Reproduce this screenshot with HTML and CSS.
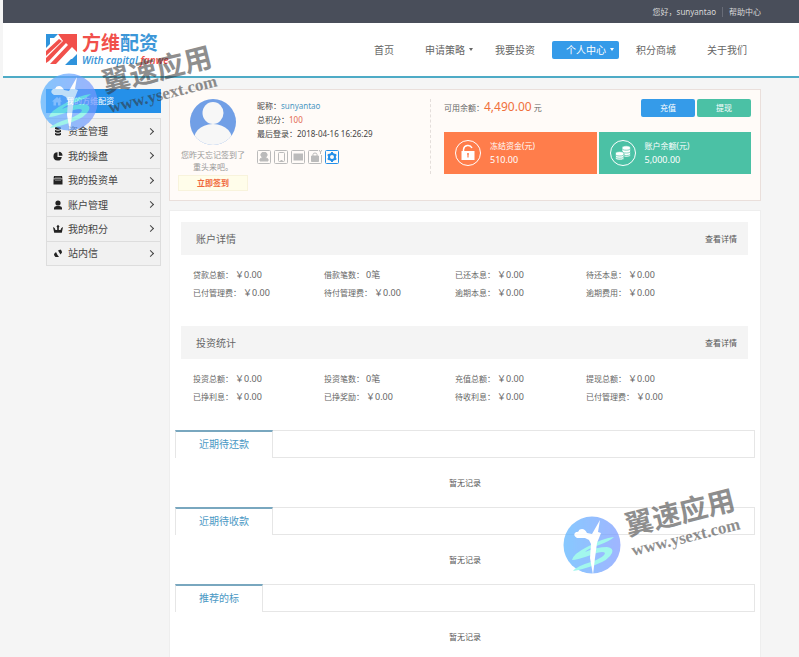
FILE: index.html
```
<!DOCTYPE html>
<html lang="zh-CN">
<head>
  <meta charset="UTF-8">
  <meta name="viewport" content="width=device-width, initial-scale=1.0"/>
  <title>方维配资 - 个人中心</title>
  <link rel="stylesheet" href="styles.css">
</head>
<body>
  <div class="topbar">
    <span>您好，sunyantao</span>
    <a href="#" class="help">帮助中心</a>
  </div>

  <header class="header">
    <a href="#" class="logo">
      <svg class="logo_icon" viewBox="0 0 31 31">
        <path d="M0 0H12L8 4H4V10L0 14Z" fill="#2f93dc"/>
        <path d="M31 20V31H19L25 25H26Z" fill="#2f93dc"/>
        <path d="M12 0H31V18L26 13L10 30H4L22 11L20 9L3 27L0 29V24L17 7Z" fill="#f1504b"/>
        <path d="M0 17L13 5L16 7L0 22Z" fill="#f1504b"/>
      </svg>
      <span class="logo_text">
        <span class="logo_name">方维<span class="blue">配资</span></span>
        <span class="slogan">With capital <span class="red">fanwe</span></span>
      </span>
    </a>
    <nav class="nav">
      <a href="#">首页</a>
      <a href="#" class="drop">申请策略</a>
      <a href="#">我要投资</a>
      <a href="#" class="drop active">个人中心</a>
      <a href="#">积分商城</a>
      <a href="#">关于我们</a>
    </nav>
  </header>

  <div class="container">
    <aside class="sidebar">
      <a href="#" class="side_home">
        <svg viewBox="0 0 10 10"><path class="house" d="M5 1L0 5.500H1.500V9.500H4V6.500H6V9.500H8.500V5.500H10L8.500 4V1.500H7V2.800Z"/></svg>
        我的方维配资
      </a>
      <ul class="side_menu">
        <li><a href="#"><svg viewBox="0 0 10 10"><path d="M2 1.500Q5 0 8 1.500V3Q5 4.500 2 3ZM2 4Q5 5.500 8 4V6Q5 7.500 2 6ZM2 7Q5 8.500 8 7V8.700Q5 10.500 2 8.700Z"/></svg>资金管理</a></li>
        <li><a href="#"><svg viewBox="0 0 10 10"><path d="M4.500 1.200A4.200 4.200 0 1 0 8.800 6H4.500ZM5.800 .8V4.800H9.500A4 4 0 0 0 5.800 .8Z"/></svg>我的操盘</a></li>
        <li><a href="#"><svg viewBox="0 0 10 10"><path d="M1 1H9L9.500 3.500H.5ZM.5 4.300H9.500V9.500H.5Z"/><path d="M2 2.300H8M2 5.500H8" stroke="#999" stroke-width=".6"/></svg>我的投资单</a></li>
        <li><a href="#"><svg viewBox="0 0 10 10"><circle cx="5" cy="3" r="2.600"/><path d="M1 9.500V8Q1 6.300 3.500 6H6.500Q9 6.300 9 8V9.500Z"/></svg>账户管理</a></li>
        <li><a href="#"><svg viewBox="0 0 10 10"><path d="M0 3L1.600 4L2.500 6H4.200V3.500L3.500 2.500L5 .8L6.500 2.500L5.800 3.500V6H7.500L8.400 4L10 3L8.800 8.700H1.200Z"/></svg>我的积分</a></li>
        <li><a href="#"><svg viewBox="0 0 10 10"><path d="M1 6L3 4L4.500 7L6 9H2.500Q1 8 1 6ZM5 2.500L7.500 1.500Q9 2.500 9 4.500L7.500 6.500Z"/></svg>站内信</a></li>
      </ul>
    </aside>

    <main class="main">
      <section class="profile">
        <div class="sign">
          <svg class="avatar" viewBox="0 0 46 46">
            <defs><clipPath id="round"><circle cx="23" cy="23" r="23"/></clipPath></defs>
            <g clip-path="url(#round)">
              <rect width="46" height="46" fill="#719fe6"/>
              <ellipse cx="23" cy="14" rx="10.500" ry="11" fill="#f7f7f7"/>
              <path d="M3 46Q3 26 23 25Q43 26 43 46Z" fill="#f7f7f7"/>
            </g>
          </svg>
          <p>您昨天忘记签到了<br>重头来吧。</p>
          <button type="button" class="sign_btn">立即签到</button>
        </div>
        <div class="info">
          <p>昵称：<a href="#">sunyantao</a></p>
          <p>总积分：<span class="score">100</span></p>
          <p>最后登录：2018-04-16 16:26:29</p>
          <div class="badges">
            <svg viewBox="0 0 14 14"><rect x=".5" y=".5" width="13" height="13" rx="1"/><path class="fill" d="M7 2.500A2.300 2.300 0 0 1 8.500 7Q8.500 8 11 9V11H3V9Q5.500 8 5.500 7A2.300 2.300 0 0 1 7 2.500Z"/></svg>
            <svg viewBox="0 0 14 14"><rect x=".5" y=".5" width="13" height="13" rx="1"/><rect x="4.500" y="2.500" width="6" height="9" rx="1"/><path d="M6.500 10.500H8.500"/></svg>
            <svg viewBox="0 0 14 14"><rect x=".5" y=".5" width="13" height="13" rx="1"/><rect class="fill" x="3" y="4" width="8.500" height="6"/></svg>
            <svg viewBox="0 0 14 14"><path d="M10 .5H1.500Q.5 .5 .5 1.500V12.500Q.5 13.500 1.500 13.500H12.500Q13.500 13.500 13.500 12.500V5M11 0L12.500 2L14 0M12.500 2V4"/><path class="fill" d="M3.500 6H10.500V11.500H3.500Z"/><path d="M5 6V4.500Q5 3 7 3T9 4.500V6"/></svg>
            <svg class="on" viewBox="0 0 14 14"><rect x=".5" y=".5" width="13" height="13" rx="1"/><circle cx="7" cy="7" r="3" stroke-width="2"/><path stroke-width="2" d="M7 2V4M7 10V12M2.700 4.500L4.400 5.500M9.600 8.500L11.300 9.500M2.700 9.500L4.400 8.500M9.600 5.500L11.300 4.500"/></svg>
          </div>
        </div>
        <div class="money">
          <div class="balance">
            <p>可用余额：<strong>4,490.00</strong> 元</p>
            <div class="btns">
              <button type="button" class="btn recharge">充值</button>
              <button type="button" class="btn withdraw">提现</button>
            </div>
          </div>
          <div class="cards">
            <div class="card frozen">
              <svg viewBox="0 0 28 28"><circle cx="14" cy="14" r="12.500" fill="none" stroke="#fff"/><path d="M9.500 12V10.500A4.500 4.500 0 0 1 18 9" fill="none" stroke="#fff" stroke-width="1.500"/><rect x="7.500" y="12" width="13" height="9" fill="#fff"/><path d="M14 14V18.500M13 15H15" stroke="#ff7d4b" stroke-width="1.200"/></svg>
              <div>
                <p>冻结资金(元)</p>
                <p class="num">510.00</p>
              </div>
            </div>
            <div class="card total">
              <svg viewBox="0 0 28 28"><circle cx="14" cy="14" r="12.500" fill="none" stroke="#fff"/><g fill="#fff" stroke="#4bc1a5" stroke-width=".7"><path d="M13 9V16A4.200 2 0 0 0 21.500 16V9Z"/><path d="M13 12A4.200 2 0 0 0 21.500 12M13 14.500A4.200 2 0 0 0 21.500 14.500" fill="none"/><ellipse cx="17.200" cy="9" rx="4.300" ry="2.200"/><path d="M6.500 15V19A4.200 2 0 0 0 15 19V15Z"/><path d="M6.500 17.200A4.200 2 0 0 0 15 17.200" fill="none"/><ellipse cx="10.700" cy="14.800" rx="4.300" ry="2.200"/></g></svg>
              <div>
                <p>账户余额(元)</p>
                <p class="num">5,000.00</p>
              </div>
            </div>
          </div>
        </div>
      </section>

      <section class="detail">
        <div class="block">
          <div class="block_title"><h2>账户详情</h2><a href="#">查看详情</a></div>
          <ul class="stats">
            <li>贷款总额：<span>￥0.00</span></li>
            <li>借款笔数：<span>0笔</span></li>
            <li>已还本息：<span>￥0.00</span></li>
            <li>待还本息：<span>￥0.00</span></li>
            <li>已付管理费：<span>￥0.00</span></li>
            <li>待付管理费：<span>￥0.00</span></li>
            <li>逾期本息：<span>￥0.00</span></li>
            <li>逾期费用：<span>￥0.00</span></li>
          </ul>
        </div>
        <div class="block">
          <div class="block_title"><h2>投资统计</h2><a href="#">查看详情</a></div>
          <ul class="stats">
            <li>投资总额：<span>￥0.00</span></li>
            <li>投资笔数：<span>0笔</span></li>
            <li>充值总额：<span>￥0.00</span></li>
            <li>提现总额：<span>￥0.00</span></li>
            <li>已挣利息：<span>￥0.00</span></li>
            <li>已挣奖励：<span>￥0.00</span></li>
            <li>待收利息：<span>￥0.00</span></li>
            <li>已付管理费：<span>￥0.00</span></li>
          </ul>
        </div>

        <div class="record">
          <div class="tabs"><a href="#">近期待还款</a></div>
          <p>暂无记录</p>
        </div>
        <div class="record">
          <div class="tabs"><a href="#">近期待收款</a></div>
          <p>暂无记录</p>
        </div>
        <div class="record">
          <div class="tabs"><a href="#">推荐的标</a></div>
          <p>暂无记录</p>
        </div>
      </section>
    </main>
  </div>

  <!-- site marks lying over the page -->
  <svg class="mark mark_top" viewBox="0 0 184 96">
    <defs>
      <linearGradient id="sky" x1="0" y1="0" x2="1" y2="0">
        <stop offset="0" stop-color="#55b2ff"/>
        <stop offset="1" stop-color="#7897ff"/>
      </linearGradient>
      <g id="mark">
        <g opacity=".7">
          <circle cx="31" cy="62" r="28.500" fill="url(#sky)"/>
          <path d="M12 88Q16 83 30 79Q44 74 44 70Q42 67 30 72Q16 77 11 77Q12 71 26 64Q42 55 53 54Q49 58 38 62Q26 66 24 69Q36 64 46 64Q53 65 51 70Q48 77 34 82Q20 87 12 88Z" fill="#7bf5e6"/>
          <path d="M39 37L37 49L40 50L36 60L34 75L32 92L29 75L30 61L28 57L24 55L16 55Q11 52 15 49Q18 49 18 47Q23 44 26 50L31 51Z" fill="#fff"/>
        </g>
        <g fill="#333" opacity=".55" font-weight="bold">
          <text transform="translate(67 53) rotate(-14)" class="mark_name">翼速应用</text>
          <text transform="translate(72 73) rotate(-14)" class="mark_url">www.ysext.com</text>
        </g>
      </g>
    </defs>
    <use href="#mark"/>
  </svg>
  <svg class="mark mark_bottom" viewBox="0 0 184 96"><use href="#mark"/></svg>
</body>
</html>
```
FILE: styles.css
```
*{
  box-sizing: border-box;
  margin: 0;
  padding: 0;
}
body{
  position: relative;
  display: flex;
  flex-direction: column;
  min-height: 100vh;
  padding-left: 3px;
  background-color: #f5f5f5;
  color: #666;
  font-family: "Noto Sans", "Noto Sans CJK SC", sans-serif;
  font-size: 8px;
  line-height: 14px;
}
a{
  color: inherit;
  text-decoration: none;
}
ul{
  list-style: none;
}
button{
  border: 0;
  font: inherit;
  cursor: pointer;
}
svg{
  display: block;
  flex: none;
}
.topbar{
  display: flex;
  justify-content: flex-end;
  align-items: center;
  height: 23px;
  padding-right: 38px;
  background-color: #494e5a;
  color: #d8d8d8;
}
.help{
  margin-left: 6px;
  padding-left: 6px;
  border-left: 1px solid #686c77;
  line-height: 10px;
}
.header{
  display: flex;
  justify-content: space-between;
  align-items: center;
  height: 55px;
  padding: 0 38px 0 43px;
  background-color: #fff;
  border-bottom: 2px solid #4eabc6;
}
.logo{
  display: flex;
  align-items: center;
  gap: 5px;
}
.logo_icon{
  width: 31px;
  height: 31px;
}
.logo_text{
  display: flex;
  flex-direction: column;
}
.logo_name{
  color: #f1504b;
  font-size: 19px;
  font-weight: bold;
  line-height: 20px;
}
.blue{
  color: #3d97d8;
}
.red{
  color: #f1504b;
}
.slogan{
  color: #3d97d8;
  font-size: 10px;
  font-style: italic;
  font-weight: 600;
  line-height: 14px;
}
.nav{
  display: flex;
  gap: 3px;
  font-size: 10px;
  line-height: 18px;
}
.nav a{
  padding: 0 14px;
  border-radius: 2px;
}
.nav .drop{
  display: flex;
  align-items: center;
  padding-right: 5px;
}
.drop::after{
  content: "";
  margin-left: 4px;
  border: 2px solid transparent;
  border-top: 3px solid currentColor;
  border-bottom: 0;
}
.nav .active{
  background-color: #359be9;
  color: #fff;
}
.container{
  display: flex;
  flex: 1;
  gap: 8px;
  padding: 11px 38px 0 43px;
}
.sidebar{
  width: 115px;
  color: #444;
  font-size: 10px;
}
.sidebar svg{
  width: 10px;
  height: 10px;
  fill: #222;
}
.sidebar .house{
  fill: #d4eafb;
}
.side_home{
  display: flex;
  align-items: center;
  gap: 4px;
  height: 24px;
  padding-left: 6px;
  background-color: #2590e9;
  color: #fff;
  font-size: 8px;
}
.side_menu{
  display: grid;
  grid-auto-rows: 1fr;
  height: 148px;
  margin-top: 5px;
  border: 1px solid #ddd;
  background-color: #f1f1f1;
}
.side_menu li + li{
  border-top: 1px solid #ddd;
}
.side_menu a{
  display: flex;
  align-items: center;
  gap: 5px;
  height: 100%;
  padding: 0 7px 0 6px;
}
.side_menu a::after{
  content: "";
  width: 4px;
  height: 4px;
  margin-left: auto;
  border: solid #444;
  border-width: 1px 1px 0 0;
  transform: rotate(45deg);
}
.main{
  display: flex;
  flex: 1;
  flex-direction: column;
  gap: 9px;
}
.profile{
  display: flex;
  height: 112px;
  padding: 9px 9px 9px 8px;
  border: 1px solid #eadfdb;
  background-color: #fffbf8;
}
.sign{
  display: flex;
  flex-direction: column;
  align-items: center;
  width: 70px;
  color: #999;
  text-align: center;
  line-height: 12px;
}
.avatar{
  width: 46px;
  height: 46px;
  margin-bottom: 4px;
}
.sign_btn{
  width: 70px;
  height: 16px;
  margin-top: 2px;
  border: 1px solid #f8f3dc;
  background-color: #fffdea;
  color: #f0673a;
  font-weight: bold;
}
.info{
  flex: 1;
  padding-left: 9px;
  color: #444;
}
.info a{
  color: #4a98c4;
}
.score{
  color: #e2674f;
}
.badges{
  display: flex;
  gap: 3px;
  margin-top: 9px;
}
.badges svg{
  width: 14px;
  height: 14px;
  fill: none;
  stroke: #bbb;
}
.badges .fill{
  fill: #bbb;
}
.badges .on{
  stroke: #2590e9;
}
.money{
  align-self: flex-start;
  width: 321px;
  padding-left: 13px;
  border-left: 1px dashed #e4dedb;
}
.balance{
  display: flex;
  justify-content: space-between;
  line-height: 16px;
}
.balance strong{
  color: #f0703c;
  font-size: 12px;
  font-weight: normal;
}
.btns{
  display: flex;
  gap: 2px;
}
.btn{
  width: 54px;
  height: 18px;
  border-radius: 2px;
  color: #fff;
}
.recharge{
  background-color: #359be9;
}
.withdraw{
  background-color: #4bc1a5;
}
.cards{
  display: grid;
  grid-template-columns: 1fr 1fr;
  gap: 2px;
  margin-top: 15px;
}
.card{
  display: flex;
  align-items: center;
  gap: 8px;
  height: 42px;
  padding-left: 10px;
  color: #fff;
}
.card svg{
  width: 28px;
  height: 28px;
}
.frozen{
  background-color: #ff7d4b;
}
.total{
  background-color: #4bc1a5;
}
.num{
  font-size: 9px;
}
.detail{
  flex: 1;
  padding: 11px 5px 0;
  border: 1px solid #eee;
  border-bottom: 0;
  background-color: #fff;
}
.block{
  margin: 0 7px 24px 6px;
}
.block_title{
  display: flex;
  justify-content: space-between;
  align-items: center;
  height: 33px;
  padding: 0 11px 0 15px;
  background-color: #f4f4f4;
}
.block_title h2{
  font-size: 10px;
  font-weight: normal;
}
.block_title a{
  color: #555;
}
.stats{
  display: grid;
  grid-template-columns: repeat(4, 131px);
  padding: 11px 0 0 12px;
  line-height: 18px;
}
.stats span{
  margin-left: 2px;
  font-size: 9px;
}
.record{
  margin-bottom: 16px;
}
.record:last-child{
  margin-bottom: 0;
}
.tabs{
  display: flex;
  height: 28px;
  border: 1px solid #e6e6e6;
  border-left: 0;
}
.tabs a{
  height: 28px;
  margin-top: -1px;
  padding: 0 23px;
  border: 1px solid #e6e6e6;
  border-top: 2px solid #79a7bf;
  border-bottom: 0;
  background-color: #fff;
  color: #4a98c4;
  font-size: 10px;
  line-height: 25px;
}
.record p{
  margin-top: 16px;
  line-height: 17px;
  color: #555;
  text-align: center;
}
.mark{
  position: absolute;
  width: 184px;
  height: 96px;
  pointer-events: none;
}
.mark_top{
  left: 38px;
  top: 40px;
}
.mark_bottom{
  left: 561px;
  top: 483px;
}
.mark_name{
  font-family: "Noto Sans CJK SC", sans-serif;
  font-size: 28px;
}
.mark_url{
  font-family: "Liberation Serif", serif;
  font-size: 17px;
}
```
